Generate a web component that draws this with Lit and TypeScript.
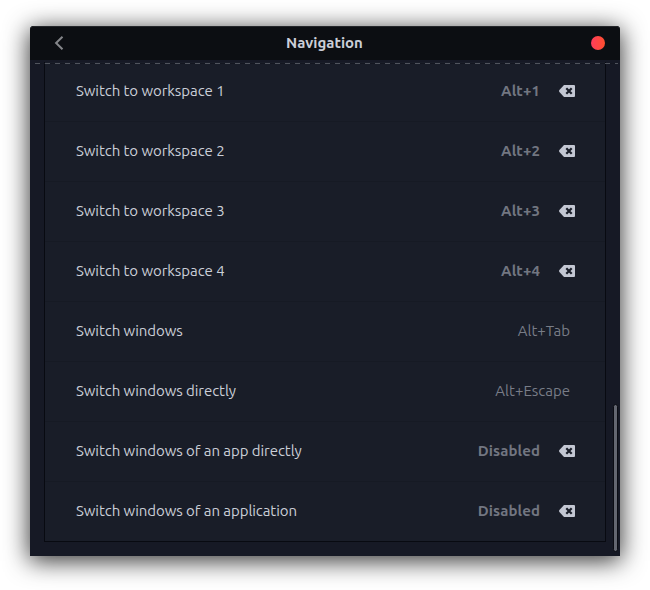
import { LitElement, html, css, nothing } from "lit";
import { customElement } from "lit/decorators.js";
import { classMap } from "lit/directives/class-map.js";

interface Shortcut {
  label: string;
  keys: string;
  custom: boolean;
}

const SHORTCUTS: Shortcut[] = [
  { label: "Switch to workspace 1", keys: "Alt+1", custom: true },
  { label: "Switch to workspace 2", keys: "Alt+2", custom: true },
  { label: "Switch to workspace 3", keys: "Alt+3", custom: true },
  { label: "Switch to workspace 4", keys: "Alt+4", custom: true },
  { label: "Switch windows", keys: "Alt+Tab", custom: false },
  { label: "Switch windows directly", keys: "Alt+Escape", custom: false },
  { label: "Switch windows of an app directly", keys: "Disabled", custom: true },
  { label: "Switch windows of an application", keys: "Disabled", custom: true },
];

@customElement("app-root")
export class AppRoot extends LitElement {
  static styles = css`
    :host {
      display: block;
      box-sizing: border-box;
      width: 650px;
      height: 590px;
      padding: 26px 30px 34px;
      background: #fff;
      overflow: hidden;
      font-family: Ubuntu, "Noto Sans", sans-serif;
      font-size: 15px;
      color: #cbcfd8;
    }
    .window {
      box-sizing: border-box;
      position: relative;
      display: flex;
      flex-direction: column;
      height: 530px;
      border-radius: 4px 4px 0 0;
      background: #161925;
      box-shadow: 0 4px 24px 1px rgba(0, 0, 0, 0.8);
    }
    .header {
      box-sizing: border-box;
      display: grid;
      grid-template-columns: 1fr auto 1fr;
      align-items: center;
      flex: none;
      height: 34px;
      padding: 0 15px 0 15px;
      border-radius: 4px 4px 0 0;
      background: #0c0e12;
      box-shadow: inset 0 1px #24262a;
    }
    .back {
      display: block;
      margin-left: 9px;
    }
    .title {
      font-weight: 700;
      padding: 0 1px 2px 0;
    }
    .close {
      justify-self: end;
      width: 14px;
      height: 14px;
      border-radius: 50%;
      background: linear-gradient(90deg, #ff3d5c, #ff4f2e);
    }
    .overflow {
      position: relative;
      z-index: 1;
      flex: none;
      height: 1px;
      margin: 3px 2px 0 5px;
      background: repeating-linear-gradient(90deg, #50545d 0 5px, #141721 5px 10px);
    }
    .list {
      box-sizing: border-box;
      flex: none;
      width: 562px;
      height: 480px;
      margin: -2px 0 0 14px;
      border: 1px solid #080a11;
      border-top: 0;
      background: #191d28;
    }
    .row {
      box-sizing: border-box;
      display: flex;
      align-items: center;
      height: 60px;
      padding: 0 30px 2px 31px;
      border-bottom: 1px solid #161a24;
    }
    .row:last-child {
      height: 59px;
      padding-bottom: 1px;
      border-bottom-color: transparent;
    }
    .label {
      flex: 1;
      white-space: nowrap;
      letter-spacing: -0.06px;
    }
    .keys {
      color: #787c87;
      margin-right: 5px;
    }
    .keys.custom {
      color: #727681;
      font-weight: 700;
      letter-spacing: 0.08px;
      margin-right: 19px;
    }
    .reset {
      display: block;
      flex: none;
    }
    .scrollbar {
      position: absolute;
      right: 2px;
      bottom: 4px;
      box-sizing: border-box;
      width: 5px;
      height: 148px;
      border: 1px solid #0b0d14;
      border-radius: 3px;
      background: #636670;
    }
  `;

  private renderReset() {
    return html`<svg class="reset" width="16" height="12" viewBox="0 0 16 12">
      <path
        fill="#c3c7d3"
        d="M5 0H15Q16 0 16 1V11Q16 12 15 12H5L0.4 7Q-.3 6 .4 5Z"
      />
      <path d="M7.3 3.3l5.4 5.4M12.7 3.3l-5.4 5.4" stroke="#191d28" stroke-width="2.2" />
    </svg>`;
  }

  render() {
    return html`<div class="window">
      <div class="header">
        <svg class="back" width="10" height="14" viewBox="0 0 10 14">
          <path d="M8.5 .7L2.1 7l6.4 6.3" fill="none" stroke="#85868a" stroke-width="2" />
        </svg>
        <div class="title">Navigation</div>
        <div class="close"></div>
      </div>
      <div class="overflow"></div>
      <div class="list">
        ${SHORTCUTS.map(
          (s) => html`<div class="row">
            <span class="label">${s.label}</span>
            <span class=${classMap({ keys: true, custom: s.custom })}>${s.keys}</span>
            ${s.custom ? this.renderReset() : nothing}
          </div>`
        )}
      </div>
      <div class="scrollbar"></div>
    </div>`;
  }
}
